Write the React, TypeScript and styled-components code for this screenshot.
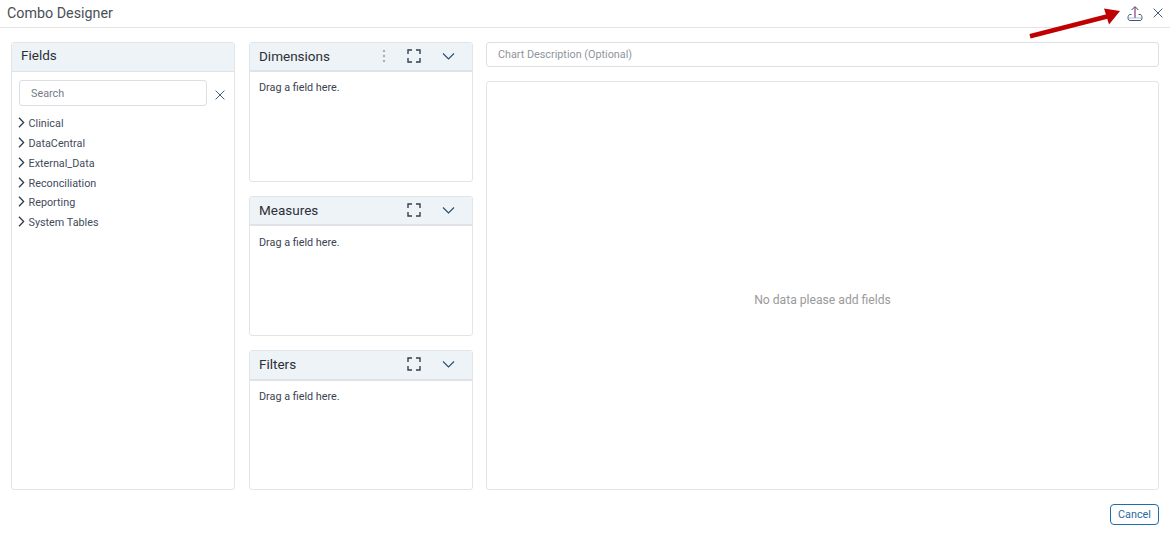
import React from 'react';
import styled, { createGlobalStyle } from 'styled-components';

const GlobalStyle = createGlobalStyle`
  html, body {
    margin: 0;
    padding: 0;
    background: #fff;
    font-family: Roboto, "Liberation Sans", sans-serif;
  }
`;

const fields = ['Clinical', 'DataCentral', 'External_Data', 'Reconciliation', 'Reporting', 'System Tables'];

const FullscreenIcon = () => (
  <svg width="14" height="14" viewBox="0 0 14 14" fill="none" stroke="#33404f" strokeWidth="1.4">
    <path d="M1 5V1h4M9 1h4v4M13 9v4H9M5 13H1V9" />
  </svg>
);

const ChevronDown = () => (
  <svg width="13" height="8" viewBox="0 0 13 8" fill="none" stroke="#2f4a6d" strokeWidth="1.1">
    <path d="M1 1.5l5.5 5.5L12 1.5" />
  </svg>
);

const ChevronRight = () => (
  <svg width="7" height="11" viewBox="0 0 7 11" fill="none" stroke="#2d3b4c" strokeWidth="1.3">
    <path d="M1 .8l4.6 4.7L1 10.2" />
  </svg>
);

const CloseIcon = ({ size }: { size: number }) => (
  <svg width={size} height={size} viewBox="0 0 10 10" fill="none" stroke="#2f4a6d" strokeWidth="0.9">
    <path d="M.6.6l8.8 8.8M9.4.6L.6 9.4" />
  </svg>
);

const MoreIcon = () => (
  <svg width="4" height="14" viewBox="0 0 4 14" fill="#a9afb6">
    <circle cx="2" cy="2" r="1.2" />
    <circle cx="2" cy="7" r="1.2" />
    <circle cx="2" cy="12" r="1.2" />
  </svg>
);

const UploadIcon = () => (
  <svg width="16" height="16" viewBox="0 0 16 16" fill="none">
    <path d="M4.5 9.5H3C1.8 9.5 1 11 1 12.8 1 14.6 1.8 15.5 3 15.5H13C14.2 15.5 15 14.6 15 12.8 15 11 14.2 9.5 13 9.5H11.5" stroke="#3d5674" strokeWidth="1" />
    <path d="M1.8 13h12.4" stroke="#a9c0d8" strokeWidth="1" />
    <path d="M8 12.8V2" stroke="#8a3a86" strokeWidth="1.2" />
    <path d="M4.6 5L8 1.6 11.4 5" stroke="#3d4a60" strokeWidth="1" />
  </svg>
);

const Panel = ({ title, more }: { title: string; more?: boolean }) => (
  <DropPanel>
    <PanelHeader>
      <PanelTitle>{title}</PanelTitle>
      {more && (
        <MoreSlot>
          <MoreIcon />
        </MoreSlot>
      )}
      <HeaderIcon $right={21}>
        <FullscreenIcon />
      </HeaderIcon>
      <HeaderIcon $right={0}>
        <ChevronDown />
      </HeaderIcon>
    </PanelHeader>
    <DropHint>Drag a field here.</DropHint>
  </DropPanel>
);

export default function App() {
  return (
    <>
      <GlobalStyle />
      <Page>
        <TopBar>
          <DialogTitle>Combo Designer</DialogTitle>
          <TopActions>
            <UploadIcon />
            <CloseIcon size={10} />
          </TopActions>
          <Arrow width="92" height="36" viewBox="0 0 92 36">
            <path d="M1 30.3L78 10.5" stroke="#c00000" strokeWidth="4.6" fill="none" />
            <path d="M91 5L75 2.5L80 18.5Z" fill="#c00000" />
          </Arrow>
        </TopBar>
        <Body>
          <FieldsPanel>
            <FieldsHeader>Fields</FieldsHeader>
            <SearchRow>
              <SearchInput placeholder="Search" />
              <CloseIcon size={10} />
            </SearchRow>
            <Tree>
              {fields.map((f) => (
                <TreeRow key={f}>
                  <ChevronRight />
                  <span>{f}</span>
                </TreeRow>
              ))}
            </Tree>
          </FieldsPanel>
          <MiddleColumn>
            <Panel title="Dimensions" more />
            <Panel title="Measures" />
            <Panel title="Filters" />
          </MiddleColumn>
          <RightColumn>
            <DescriptionInput placeholder="Chart Description (Optional)" />
            <ChartArea>No data please add fields</ChartArea>
          </RightColumn>
        </Body>
        <Footer>
          <CancelButton>Cancel</CancelButton>
        </Footer>
      </Page>
    </>
  );
}

const Page = styled.div`
  width: 1170px;
  height: 536px;
  display: flex;
  flex-direction: column;
  overflow: hidden;
`;

const TopBar = styled.div`
  position: relative;
  height: 27px;
  flex: none;
  display: flex;
  align-items: center;
  justify-content: space-between;
  padding: 0 7px 0 7px;
  border-bottom: 1px solid #e3e3e3;
`;

const DialogTitle = styled.div`
  font-size: 14.3px;
  color: #4a4f55;
  margin-top: -2px;
`;

const TopActions = styled.div`
  display: flex;
  align-items: center;
  gap: 10px;
  margin-top: -2px;
`;

const Arrow = styled.svg`
  position: absolute;
  left: 1029px;
  top: 6px;
`;

const Body = styled.div`
  display: flex;
  padding: 14px 11px 0;
  height: 448px;
  flex: none;
`;

const Card = styled.div`
  border: 1px solid #e2e5e8;
  border-radius: 3px;
  box-sizing: border-box;
  background: #fff;
`;

const FieldsPanel = styled(Card)`
  width: 224px;
  flex: none;
  display: flex;
  flex-direction: column;
`;

const FieldsHeader = styled.div`
  height: 28px;
  line-height: 25px;
  padding-left: 9px;
  background: #eef3f8;
  border-bottom: 1px solid #dfe2e6;
  font-size: 13.5px;
  color: #2b2f36;
`;

const SearchRow = styled.div`
  display: flex;
  align-items: center;
  padding: 8px 8px 0 7px;
  gap: 8px;
  svg {
    margin: 3px 1px 0 0;
    flex: none;
  }
`;

const SearchInput = styled.input`
  flex: 1;
  min-width: 0;
  height: 26px;
  box-sizing: border-box;
  border: 1px solid #dcdfe3;
  border-radius: 3px;
  padding: 0 11px;
  font: 10.8px Roboto, sans-serif;
  outline: none;
  &::placeholder {
    color: #757c85;
    opacity: 1;
  }
`;

const Tree = styled.div`
  padding: 8px 0 0 6px;
  display: flex;
  flex-direction: column;
`;

const TreeRow = styled.div`
  height: 19.75px;
  display: flex;
  align-items: center;
  gap: 3.5px;
  font-size: 10.8px;
  color: #3f4c5c;
  svg {
    margin-top: -2px;
  }
`;

const MiddleColumn = styled.div`
  width: 224px;
  flex: none;
  margin-left: 14px;
  display: flex;
  flex-direction: column;
  gap: 14.4px;
`;

const DropPanel = styled(Card)`
  height: 139.8px;
`;

const PanelHeader = styled.div`
  height: 29.3px;
  box-sizing: border-box;
  display: flex;
  align-items: center;
  padding: 0 17px 1px 9px;
  background: #eef3f8;
  border-bottom: 2px solid #dfe2e6;
  position: relative;
`;

const PanelTitle = styled.div`
  flex: 1;
  font-size: 13.5px;
  color: #2b2f36;
`;

const MoreSlot = styled.div`
  position: absolute;
  left: 132px;
  top: 6px;
  display: flex;
`;

const HeaderIcon = styled.div<{ $right: number }>`
  display: flex;
  align-items: center;
  justify-content: center;
  margin-right: ${(p) => p.$right}px;
`;

const DropHint = styled.div`
  padding: 9.15px 9px;
  font-size: 10.8px;
  line-height: 13px;
  color: #3a4350;
`;

const RightColumn = styled.div`
  flex: 1;
  margin-left: 13px;
  display: flex;
  flex-direction: column;
  gap: 14px;
`;

const DescriptionInput = styled.input`
  height: 25px;
  flex: none;
  box-sizing: border-box;
  border: 1px solid #dcdfe3;
  border-radius: 3px;
  padding: 0 11px;
  font: 10.8px Roboto, sans-serif;
  outline: none;
  &::placeholder {
    color: #8f959c;
    opacity: 1;
  }
`;

const ChartArea = styled(Card)`
  flex: 1;
  display: flex;
  align-items: center;
  justify-content: center;
  padding-top: 29px;
  font-size: 12.15px;
  color: #9a9a9a;
`;

const Footer = styled.div`
  display: flex;
  justify-content: flex-end;
  padding: 14px 11px 0;
`;

const CancelButton = styled.button`
  width: 49px;
  height: 21px;
  padding: 0;
  background: #fff;
  border: 1px solid #1d6fa8;
  border-radius: 4px;
  font: 10.8px Roboto, sans-serif;
  color: #2a6a9e;
`;
